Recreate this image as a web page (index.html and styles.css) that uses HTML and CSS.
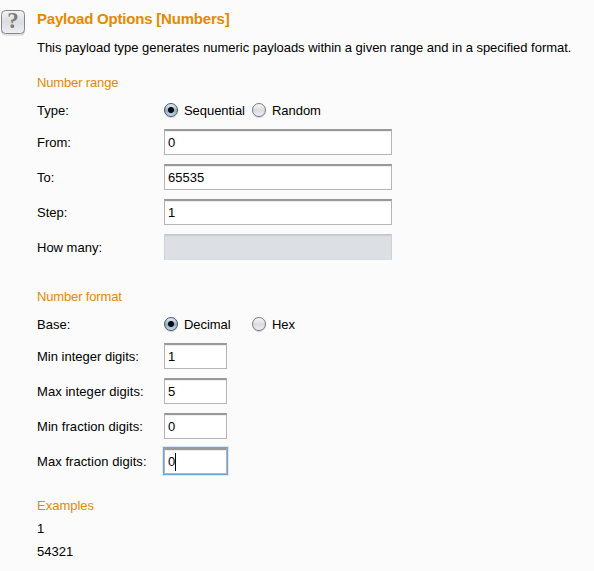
FILE: index.html
```html
<!DOCTYPE html>
<html lang="en">
<head>
<meta charset="utf-8">
<title>Payload Options</title>
<link rel="stylesheet" href="styles.css">
</head>
<body>
<main class="panel">
  <button class="help" aria-label="Help"><svg width="24" height="26" viewBox="0 0 24 26"><defs><linearGradient id="g" x2="0" y2="1"><stop stop-color="#f4f4f5"/><stop offset=".5" stop-color="#dcdde1"/><stop offset="1" stop-color="#eff0f4"/></linearGradient></defs><rect x=".5" y="1.5" width="23" height="23.5" rx="4" fill="none" stroke="#ccc"/><rect x=".5" y=".5" width="23" height="23" rx="4" fill="url(#g)" stroke="#85868b"/></svg><span class="mark">?</span></button>
  <div class="content">
    <h1 class="title">Payload Options [Numbers]</h1>
    <p class="intro">This payload type generates numeric payloads within a given range and in a specified format.</p>
    <section class="range">
      <h2 class="heading">Number range</h2>
      <div class="row choice"><span class="label">Type:</span><span class="option"><i class="radio on"></i>Sequential</span><span class="option"><i class="radio"></i>Random</span></div>
      <div class="row"><span class="label">From:</span><div class="field">0</div></div>
      <div class="row"><span class="label">To:</span><div class="field">65535</div></div>
      <div class="row"><span class="label">Step:</span><div class="field">1</div></div>
      <div class="row"><span class="label">How many:</span><div class="field disabled"></div></div>
    </section>
    <section class="format">
      <h2 class="heading">Number format</h2>
      <div class="row choice"><span class="label">Base:</span><span class="option"><i class="radio on"></i>Decimal</span><span class="option"><i class="radio"></i>Hex</span></div>
      <div class="row"><span class="label">Min integer digits:</span><div class="field small">1</div></div>
      <div class="row"><span class="label wide">Max integer digits:</span><div class="field small">5</div></div>
      <div class="row"><span class="label wide">Min fraction digits:</span><div class="field small">0</div></div>
      <div class="row"><span class="label wide">Max fraction digits:</span><div class="field small focused">0<i class="caret"></i></div></div>
    </section>
    <section class="examples">
      <h2 class="heading">Examples</h2>
      <p class="sample">1</p>
      <p class="sample">54321</p>
    </section>
  </div>
</main>
</body>
</html>
```
FILE: styles.css
```css
* { box-sizing: border-box; }
body { margin: 0; background: #fbfbfb; color: #000; font: 13px/16px "Liberation Sans", Arial, sans-serif; overflow: hidden; }
.panel { display: flex; height: 571px; padding: 10px 0 0 1px; }
.help { position: relative; flex: none; width: 24px; height: 26px; margin: 0 12px 0 0; padding: 0; border: 0; background: none; }
.help svg { display: block; }
.mark { position: absolute; inset: -1px 0 0; font: bold 23px/24px "Liberation Serif", serif; color: #7d7d7d; text-align: center; }
h1, h2, p { margin: 0; }
.title { font-size: 15px; line-height: 18px; letter-spacing: -.2px; color: #e58900; }
.intro { margin-top: 12px; letter-spacing: -.028px; white-space: nowrap; }
.range { margin-top: 19px; }
.format { margin-top: 20px; }
.heading { font-size: 13px; font-weight: normal; line-height: 16px; letter-spacing: -.15px; color: #e58900; }
.examples .heading { letter-spacing: 0; }
.row { display: flex; align-items: flex-start; height: 35px; }
.choice { height: 16px; margin: 12px 0 10px; }
.label { width: 127px; padding-top: 6px; white-space: nowrap; }
.wide { letter-spacing: .06px; }
.choice .label { padding-top: 0; }
.option { display: flex; align-items: flex-start; width: 88px; white-space: nowrap; letter-spacing: -.05px; }
.radio { width: 14px; height: 14px; margin: 0 6px 0 0; border: 1px solid #77787d; border-radius: 50%; background: linear-gradient(#f8f8f9, #d9dbe1 55%, #f0f1f5); box-shadow: 0 1px 0 #d0d0d0; }
.radio.on { border-color: #42566b; background: radial-gradient(circle, #0a0c10 2.6px, transparent 3.5px), linear-gradient(#e3edf5, #8fabc4 55%, #c5dcec); }
.field { width: 228px; height: 26px; padding: 4px 3px; border: 1px solid #b5b5b5; border-top: 2px solid #999; background: #fff; box-shadow: inset 0 1px 0 #eee; line-height: 16px; }
.field.disabled { border: 1px solid #cfd1d5; border-top-color: #c4c5c9; border-bottom-color: #d9dce0; background: #dce0e5; box-shadow: inset 0 1px 0 #cdcfd3, inset 0 2px 0 #d7dade; }
.small { width: 63px; }
.focused { display: flex; border-color: #b5b5b5; border-top-color: #999; box-shadow: 0 0 0 1px #72a5d2, 0 0 0 2px #d9e8f5, inset 0 1px 0 #eee; }
.caret { width: 1px; height: 18px; margin-top: -1px; background: #000; }
.examples { margin-top: 15px; }
.sample { margin-top: 7px; }
```
